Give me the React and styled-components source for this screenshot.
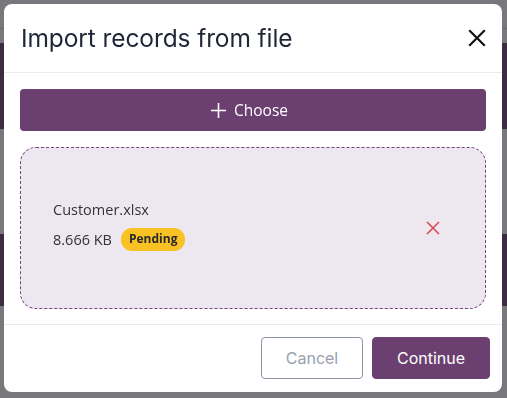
import React from "react";
import styled, { createGlobalStyle } from "styled-components";

const GlobalStyle = createGlobalStyle`
  html, body {
    margin: 0;
    padding: 0;
    height: 100%;
    overflow: hidden;
    font-family: "Open Sans", "Noto Sans", sans-serif;
  }
  #root {
    height: 100%;
  }
`;

const Page = styled("div")`
  height: 100%;
  background: #ffffff;
  display: flex;
  flex-direction: column;
`;

const TopBar = styled("div")`
  height: 28px;
  border-bottom: 1px solid #d6d6da;
  background: #ffffff;
`;

const Band = styled("div")`
  height: ${props => props.h}px;
  margin-top: ${props => props.top}px;
  background: #6b3f6f;
`;

const Overlay = styled("div")`
  position: fixed;
  inset: 0;
  background: rgba(30, 30, 36, 0.6);
  padding: 4px 5px 6px 4px;
  display: flex;
  align-items: flex-start;
  justify-content: center;
`;

const Dialog = styled("div")`
  width: 100%;
  height: 388px;
  background: #ffffff;
  border-radius: 8px;
  display: flex;
  flex-direction: column;
  overflow: hidden;
`;

const Header = styled("div")`
  height: 68px;
  flex-shrink: 0;
  display: flex;
  align-items: center;
  justify-content: space-between;
  padding: 0 14px 0 17px;
  border-bottom: 1px solid #e9eaee;
`;

const Title = styled("h2")`
  margin: 0;
  font-family: Inter, "Noto Sans", sans-serif;
  font-weight: 400;
  font-size: 24.5px;
  color: #1f2638;
  letter-spacing: -0.1px;
`;

const IconButton = styled("button")`
  border: none;
  background: none;
  padding: 0;
  margin-top: ${props => props.shift || 0}px;
  display: flex;
  align-items: center;
  justify-content: center;
  width: ${props => props.size}px;
  height: ${props => props.size}px;
  color: ${props => props.color};
  cursor: pointer;
`;

const Body = styled("div")`
  flex: 1;
  padding: 16px 16px 0;
  display: flex;
  flex-direction: column;
  gap: 16px;
`;

const ChooseButton = styled("button")`
  height: 42px;
  flex-shrink: 0;
  border: none;
  border-radius: 4px;
  background: #6b3f6f;
  color: #ffffff;
  font-family: "Open Sans", "Noto Sans", sans-serif;
  font-size: 15.5px;
  display: flex;
  align-items: center;
  justify-content: center;
  gap: 7px;
  padding-right: 14px;
`;

const DropZone = styled("div")`
  height: 162px;
  box-sizing: border-box;
  border: 1px dashed #74467a;
  border-radius: 16px;
  background: #ede8ef;
  display: flex;
  align-items: center;
  padding: 0 44px 6px 32px;
`;

const FileRow = styled("div")`
  flex: 1;
  display: flex;
  align-items: center;
  justify-content: space-between;
`;

const FileInfo = styled("div")`
  display: flex;
  flex-direction: column;
  gap: 9px;
  color: #333338;
  font-size: 14.5px;
`;

const SizeLine = styled("div")`
  display: flex;
  align-items: center;
  gap: 9px;
`;

const Badge = styled("span")`
  background: #f8c224;
  color: #2a2a2a;
  font-weight: 700;
  font-size: 12px;
  border-radius: 11px;
  padding: 3px 8px 4px;
  line-height: 16px;
`;

const Footer = styled("div")`
  height: 66px;
  flex-shrink: 0;
  border-top: 1px solid #e9eaee;
  display: flex;
  align-items: center;
  justify-content: flex-end;
  gap: 9px;
  padding: 0 12px 1px;
`;

const ActionButton = styled("button")`
  height: 42px;
  width: ${props => props.w}px;
  border-radius: 4px;
  font-family: Inter, "Liberation Sans", sans-serif;
  font-size: 16px;
  border: 1px solid ${props => (props.primary ? "#6b3f6f" : "#8b93a6")};
  background: ${props => (props.primary ? "#6b3f6f" : "#ffffff")};
  color: ${props => (props.primary ? "#ffffff" : "#9aa1b1")};
`;

const CloseIcon = ({ size = 18, stroke = 2.2 }) => (
  <svg width={size} height={size} viewBox="0 0 18 18" fill="none">
    <path
      d="M2 2 L16 16 M16 2 L2 16"
      stroke="currentColor"
      strokeWidth={stroke}
      strokeLinecap="square"
    />
  </svg>
);

const PlusIcon = () => (
  <svg width="17" height="17" viewBox="0 0 17 17" fill="none">
    <path d="M8.5 1 V16 M1 8.5 H16" stroke="currentColor" strokeWidth="1.6" />
  </svg>
);

const App = () => {
  return (
    <React.Fragment>
      <GlobalStyle />
      <Page>
        <TopBar />
        <Band top={14} h={86} />
        <Band top={105} h={72} />
      </Page>
      <Overlay>
        <Dialog>
          <Header>
            <Title>Import records from file</Title>
            <IconButton size={22} color="#111111">
              <CloseIcon size={18} stroke={2.2} />
            </IconButton>
          </Header>
          <Body>
            <ChooseButton>
              <PlusIcon />
              Choose
            </ChooseButton>
            <DropZone>
              <FileRow>
                <FileInfo>
                  <span>Customer.xlsx</span>
                  <SizeLine>
                    <span>8.666 KB</span>
                    <Badge>Pending</Badge>
                  </SizeLine>
                </FileInfo>
                <IconButton size={16} shift={5} color="#d9474f">
                  <CloseIcon size={14} stroke={2} />
                </IconButton>
              </FileRow>
            </DropZone>
          </Body>
          <Footer>
            <ActionButton w={102}>Cancel</ActionButton>
            <ActionButton w={118} primary>
              Continue
            </ActionButton>
          </Footer>
        </Dialog>
      </Overlay>
    </React.Fragment>
  );
};

export default App;
